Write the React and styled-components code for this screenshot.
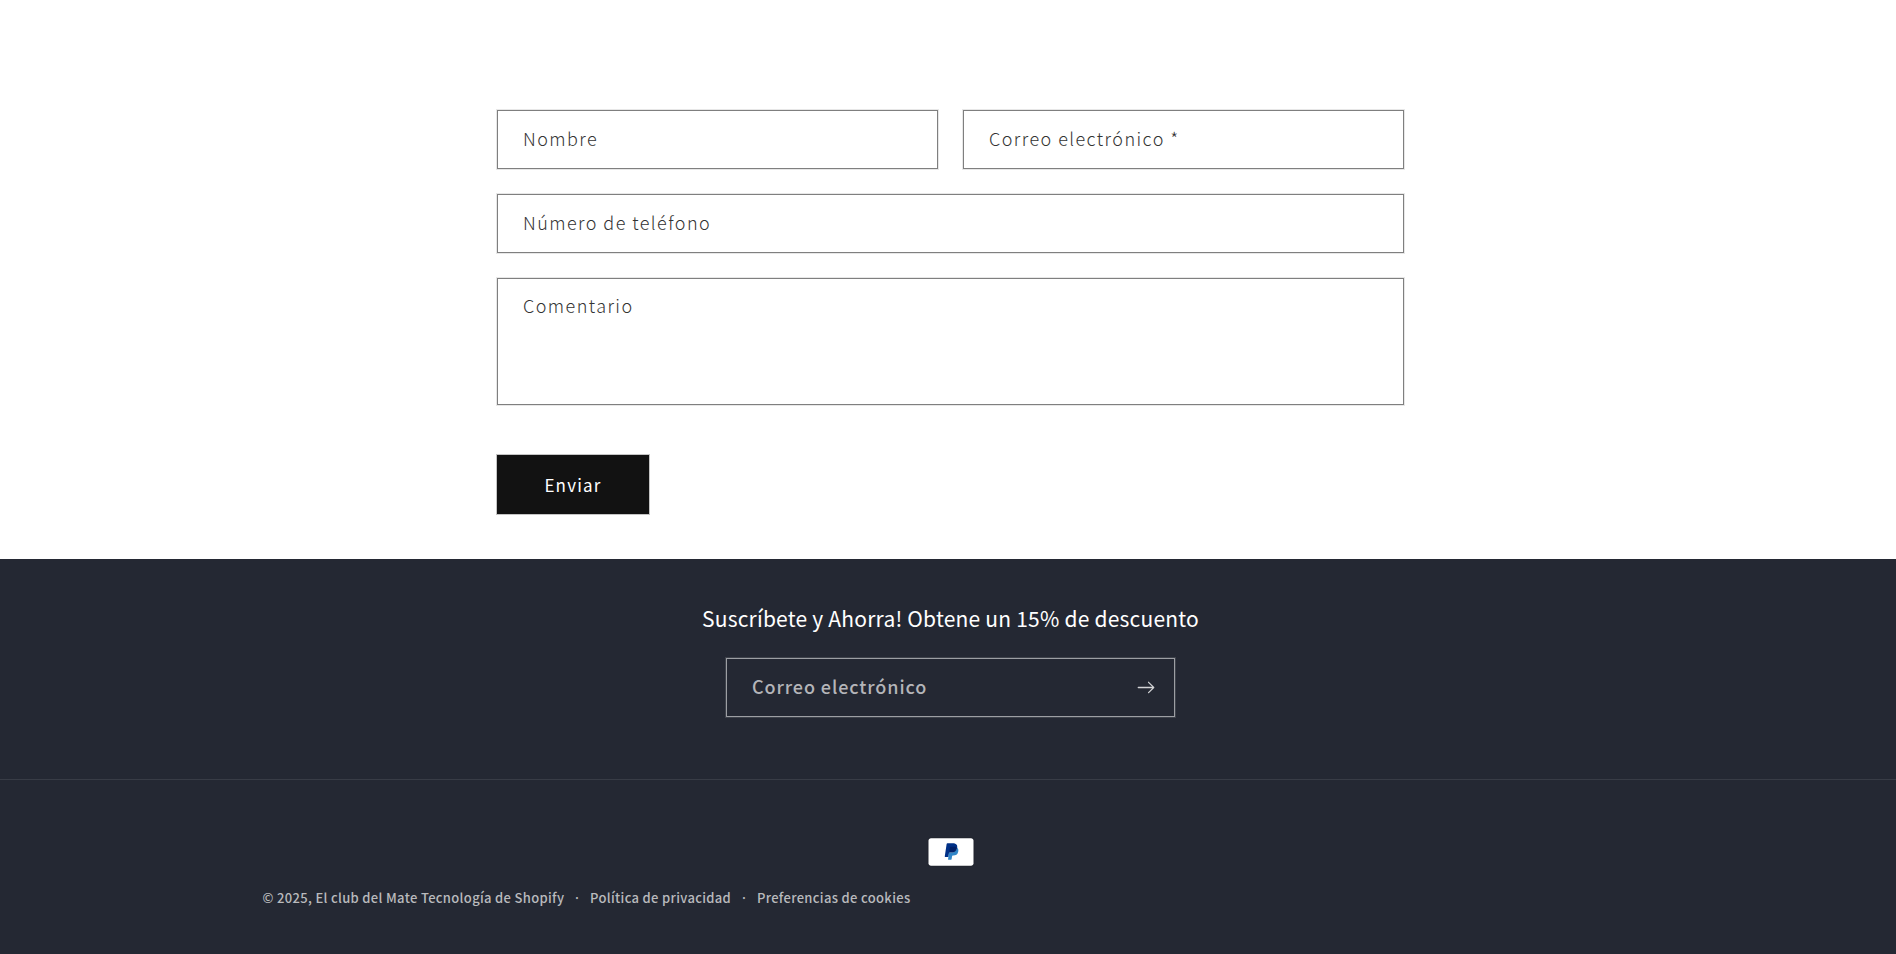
import { useState } from "react";
import styled, { createGlobalStyle } from "styled-components";

export default function App() {
    const [email, setEmail] = useState("");

    function handleSubmit(e) {
        e.preventDefault();
    }

    return (
        <>
            <GlobalStyle />
            <Main>
                <ContactForm onSubmit={handleSubmit}>
                    <Row>
                        <Input type="text" name="nombre" aria-label="Nombre" placeholder="Nombre" />
                        <Input type="email" name="correo" aria-label="Correo electrónico" placeholder="Correo electrónico *" required />
                    </Row>
                    <Input type="tel" name="telefono" aria-label="Número de teléfono" placeholder="Número de teléfono" />
                    <TextArea name="comentario" aria-label="Comentario" placeholder="Comentario" />
                    <SendButton type="submit">Enviar</SendButton>
                </ContactForm>
            </Main>
            <Footer>
                <Newsletter>
                    <h2>Suscríbete y Ahorra! Obtene un 15% de descuento</h2>
                    <NewsletterForm onSubmit={handleSubmit}>
                        <input
                            type="email"
                            aria-label="Correo electrónico"
                            placeholder="Correo electrónico"
                            value={email}
                            onChange={(e) => setEmail(e.target.value)}
                        />
                        <button type="submit" aria-label="Suscribirse">
                            <ArrowIcon />
                        </button>
                    </NewsletterForm>
                </Newsletter>
                <FooterBottom>
                    <Payments>
                        <PaypalIcon />
                    </Payments>
                    <Copyright>
                        <small>
                            © 2025, <a href="#inicio">El club del Mate</a> <a href="#shopify">Tecnología de Shopify</a>
                        </small>
                        <Policies>
                            <li><a href="#privacidad">Política de privacidad</a></li>
                            <li><a href="#cookies">Preferencias de cookies</a></li>
                        </Policies>
                    </Copyright>
                </FooterBottom>
            </Footer>
        </>
    );
}

function ArrowIcon() {
    return (
        <svg viewBox="0 0 14 10" width="18" height="13" fill="none" aria-hidden="true">
            <path
                fill="currentColor"
                fillRule="evenodd"
                clipRule="evenodd"
                d="M8.537.808a.5.5 0 0 1 .817-.162l4 4a.5.5 0 0 1 0 .708l-4 4a.5.5 0 1 1-.708-.708L11.793 5.5H1a.5.5 0 0 1 0-1h10.793L8.646 1.354a.5.5 0 0 1-.109-.546z"
            />
        </svg>
    );
}

function PaypalIcon() {
    return (
        <svg viewBox="0 0 38 24" width="48" height="30" role="img" aria-label="PayPal">
            <path opacity=".07" d="M35 0H3C1.3 0 0 1.3 0 3v18c0 1.7 1.4 3 3 3h32c1.7 0 3-1.3 3-3V3c0-1.7-1.4-3-3-3z" />
            <path fill="#fff" d="M35 1c1.1 0 2 .9 2 2v18c0 1.1-.9 2-2 2H3c-1.1 0-2-.9-2-2V3c0-1.1.9-2 2-2h32" />
            <path fill="#003087" d="M23.9 8.3c.2-1 0-1.7-.6-2.3-.6-.7-1.7-1-3.1-1h-4.1c-.3 0-.5.2-.6.5L14 15.6c0 .2.1.4.3.4H17l.4-3.4 1.8-2.2 4.7-2.1z" />
            <path fill="#3086C8" d="M23.9 8.3l-.2.2c-.5 2.8-2.2 3.8-4.6 3.8H18c-.3 0-.5.2-.6.5l-.6 3.9-.2 1c0 .2.1.4.3.4H19c.3 0 .5-.2.5-.4v-.1l.4-2.4v-.1c0-.2.3-.4.5-.4h.3c2.1 0 3.7-.8 4.1-3.2.2-1 .1-1.8-.4-2.4-.1-.5-.3-.7-.5-.8z" />
            <path fill="#012169" d="M23.3 8.1c-.1-.1-.2-.1-.3-.1-.1 0-.2 0-.3-.1-.3-.1-.7-.1-1.1-.1h-3c-.1 0-.2 0-.2.1-.2.1-.3.2-.3.4l-.7 4.4v.1c0-.3.3-.5.6-.5h1.3c2.5 0 4.1-1 4.6-3.8v-.2c-.1-.1-.3-.2-.5-.2h-.1z" />
        </svg>
    );
}

const GlobalStyle = createGlobalStyle`
    * {
        box-sizing: border-box;
    }
    body {
        margin: 0;
        background-color: #242833;
    }
    body, input, textarea, button {
        font-family: "Noto Sans CJK JP", "Noto Sans", sans-serif;
    }
`

const Main = styled.main`
    padding: 110px 20px 45px 25px;
    background-color: #fff;
`

const ContactForm = styled.form`
    display: flex;
    flex-direction: column;
    gap: 25px;
    max-width: 907px;
    margin: 0 auto;
`

const Row = styled.div`
    display: grid;
    grid-template-columns: 1fr 1fr;
    gap: 25px;
`

const Input = styled.input`
    width: 100%;
    height: 59px;
    padding: 0 25px 4px;
    border: 1px solid #7f7f7f;
    border-radius: 0;
    box-shadow: 0 0 0 1px rgba(18, 18, 18, 0.1);
    background-color: #fff;
    font-size: 18px;
    font-weight: 300;
    letter-spacing: 0.08em;
    color: #121212;
    &::placeholder {
        color: #333;
        opacity: 1;
    }
`

const TextArea = styled(Input).attrs({ as: "textarea" })`
    height: 127px;
    padding: 13px 25px;
    line-height: 27px;
    resize: none;
`

const SendButton = styled.button`
    align-self: flex-start;
    min-width: 152px;
    height: 59px;
    margin-top: 25px;
    padding: 0 40px 1px;
    border: none;
    box-shadow: 0 0 0 1px rgba(18, 18, 18, 0.25);
    background-color: #121212;
    color: #fff;
    font-size: 17px;
    letter-spacing: 0.07em;
    cursor: pointer;
`

const Footer = styled.footer`
    background-color: #242833;
    color: #fff;
`

const Newsletter = styled.section`
    display: flex;
    flex-direction: column;
    align-items: center;
    gap: 23px;
    padding: 43px 20px 62px 25px;
    border-bottom: 1px solid #383c46;
    h2 {
        margin: 0;
        font-size: 21px;
        line-height: 33px;
        font-weight: 400;
        letter-spacing: 0.01em;
    }
`

const NewsletterForm = styled.form`
    display: flex;
    width: 100%;
    max-width: 449px;
    height: 59px;
    border: 1px solid #9c9ea3;
    box-shadow: 0 0 0 1px rgba(255, 255, 255, 0.12);
    input {
        flex: 1;
        min-width: 0;
        padding: 0 0 4px 25px;
        border: none;
        background: transparent;
        color: #fff;
        font-size: 18px;
        font-weight: 500;
        letter-spacing: 0.05em;
    }
    input::placeholder {
        color: #b4b5b9;
        opacity: 1;
    }
    button {
        display: flex;
        align-items: center;
        justify-content: center;
        width: 56px;
        padding: 0;
        border: none;
        background: transparent;
        color: #d3d4d6;
        cursor: pointer;
    }
`

const FooterBottom = styled.div`
    padding: 57px 0 45px 5px;
`

const Payments = styled.div`
    display: flex;
    justify-content: center;
`

const Copyright = styled.div`
    display: flex;
    align-items: center;
    flex-wrap: wrap;
    max-width: 1500px;
    margin: 20px auto 0;
    padding: 0 62px;
    font-size: 13px;
    font-weight: 500;
    line-height: 22px;
    letter-spacing: 0.025em;
    color: #b9babd;
    small {
        font-size: 13px;
    }
    a {
        color: inherit;
        text-decoration: none;
    }
`

const Policies = styled.ul`
    display: flex;
    margin: 0;
    padding: 0;
    list-style: none;
    li::before {
        content: "·";
        padding: 0 9px;
    }
`
